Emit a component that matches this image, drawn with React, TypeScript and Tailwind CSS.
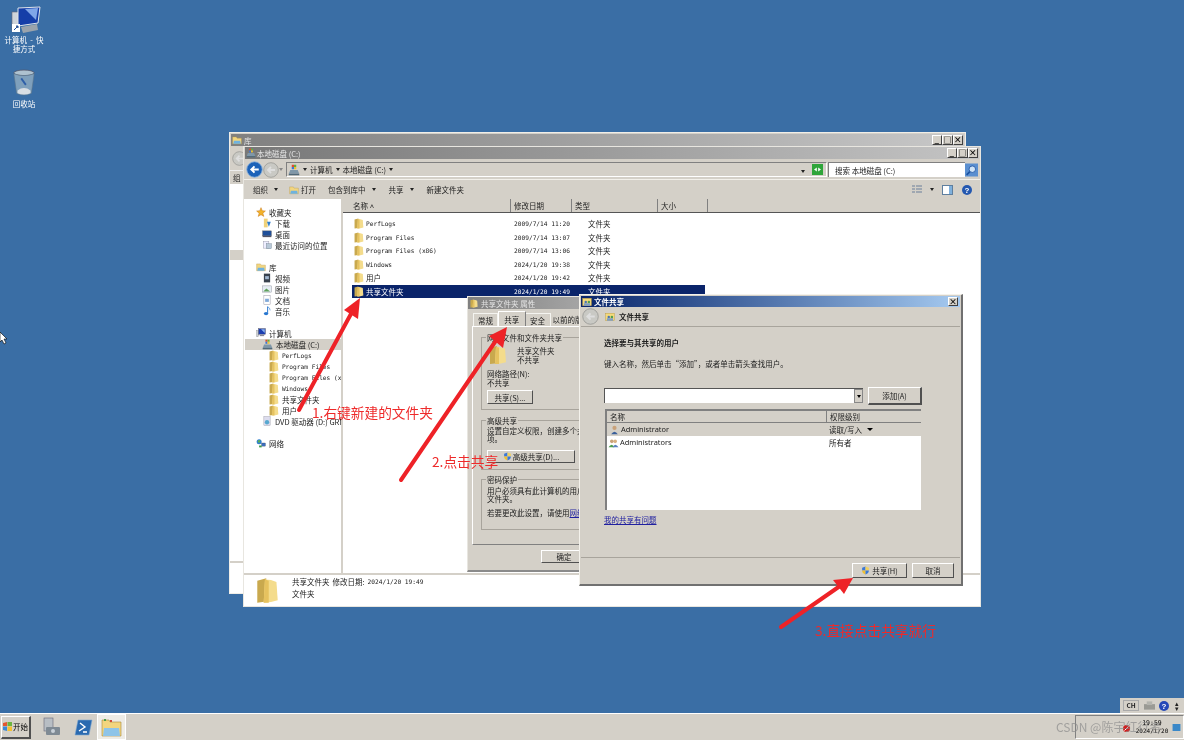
import React from "react";

const Btn = ({ children, className = "" }: { children: React.ReactNode; className?: string }) => (
  <div className={"flex items-center justify-center bg-[#d4d0c8] border border-t-white border-l-white border-r-[#505050] border-b-[#505050] text-[7.5px] text-[#222] " + className}>{children}</div>
);

const Folder = ({ s = 11, w }: { s?: number; w?: number }) => (
  <svg width={w ?? s * 0.9} height={s} viewBox="0 0 18 22" preserveAspectRatio="none" className="shrink-0">
    <path d="M1 3 L8 1 L8 20 L1 21 Z" fill="#c9a94e" />
    <path d="M7 2 Q12 2 16 4 L17 19 Q12 21 6 21 Z" fill="#f4dc8c" />
    <path d="M7 2 L10 3 L10 21 L6 21 Z" fill="#e6c25f" />
  </svg>
);

const WinBtns = () => (
  <div className="flex ml-auto">
    {["_", "□", "×"].map((c) => (
      <div key={c} className="w-[10.5px] h-[10px] bg-[#d4d0c8] border border-t-white border-l-white border-r-[#404040] border-b-[#404040] flex items-center justify-center text-[8px] leading-none text-black font-bold">{c}</div>
    ))}
  </div>
);

const Computer = ({ s = 10 }: { s?: number }) => (
  <svg width={s} height={s} viewBox="0 0 16 16" className="shrink-0">
    <rect x="1" y="4" width="3" height="10" fill="#c8ccd2" stroke="#777" strokeWidth=".5" />
    <rect x="4" y="1" width="11" height="9" fill="#1d3fb0" stroke="#556" strokeWidth=".7" />
    <path d="M8 2 L14 2 L14 8 Z" fill="#8ab2ee" />
    <rect x="6" y="11" width="7" height="2" fill="#889" />
  </svg>
);
const Drive = ({ s = 11 }: { s?: number }) => (
  <svg width={s} height={s} viewBox="0 0 16 16" className="shrink-0">
    <rect x="5" y="1" width="3" height="3" fill="#e3482f" />
    <rect x="8" y="1" width="3" height="3" fill="#60b040" />
    <rect x="5" y="4" width="3" height="3" fill="#3a78d8" />
    <rect x="8" y="4" width="3" height="3" fill="#f0c030" />
    <path d="M3 8 L13 8 L15 13 L1 13 Z" fill="#7f97a8" />
    <rect x="1" y="13" width="14" height="2" fill="#506878" />
  </svg>
);
const Star = () => (
  <svg width="10" height="10" viewBox="0 0 16 16" className="shrink-0"><path d="M8 1 L10 6 L15 6.4 L11 10 L12.5 15 L8 12.3 L3.5 15 L5 10 L1 6.4 L6 6 Z" fill="#f3b32a" stroke="#c9781c" strokeWidth=".8" /></svg>
);
const Lib = () => (
  <svg width="10" height="10" viewBox="0 0 16 16" className="shrink-0"><path d="M1 3 L7 3 L8 5 L15 5 L15 14 L1 14 Z" fill="#f2d57e" stroke="#b99a45" strokeWidth=".6" /><path d="M3 9 L13 9 L14 14 L2 14 Z" fill="#6eb2e0" /></svg>
);
const Net = () => (
  <svg width="10" height="10" viewBox="0 0 16 16" className="shrink-0"><circle cx="5" cy="6" r="4" fill="#2f7fd0" /><path d="M3 4 L7 3 L6 7 L3 7Z" fill="#5fb050" /><rect x="9" y="8" width="6" height="5" fill="#3c6ec0" stroke="#345" strokeWidth=".5" /><rect x="5" y="12" width="4" height="3" fill="#3a9a48" /></svg>
);
const Small = ({ kind }: { kind: string }) => {
  const f: Record<string, React.ReactNode> = {
    dl: <><rect x="3" y="1" width="6" height="14" fill="#f0d27a" /><path d="M8 6 L14 6 L11 14Z" fill="#2f7fd0" /></>,
    desk: <><rect x="1" y="3" width="14" height="8" fill="#1f4f9a" stroke="#555" strokeWidth=".6" /><rect x="1" y="11" width="14" height="2" fill="#556" /></>,
    rec: <><rect x="2" y="2" width="9" height="11" fill="#eef" stroke="#889" strokeWidth=".6" /><rect x="7" y="6" width="8" height="8" fill="#b8c8d8" stroke="#678" strokeWidth=".6" /></>,
    vid: <><rect x="3" y="1" width="10" height="14" fill="#39424e" /><rect x="5" y="5" width="6" height="5" fill="#9fb6d0" /></>,
    pic: <><rect x="1" y="3" width="14" height="10" fill="#e6eef4" stroke="#889" strokeWidth=".7" /><path d="M2 12 L7 7 L13 12Z" fill="#5fa05a" /></>,
    doc: <><rect x="3" y="1" width="10" height="14" fill="#fff" stroke="#889" strokeWidth=".7" /><rect x="5" y="6" width="6" height="5" fill="#7fa8d8" /></>,
    mus: <><path d="M9 1 L9 11" stroke="#2a78d0" strokeWidth="1.6" /><ellipse cx="6.5" cy="12" rx="3.5" ry="2.6" fill="#2a78d0" /><path d="M9 1 Q13 3 13 7" stroke="#2a78d0" fill="none" /></>,
    dvd: <><rect x="3" y="1" width="10" height="14" fill="#dde" stroke="#889" strokeWidth=".6" /><circle cx="8" cy="10" r="3.5" fill="#58a8d0" /></>,
  };
  return <svg width="10" height="10" viewBox="0 0 16 16" className="shrink-0">{f[kind]}</svg>;
};
const Shield = ({ s = 9 }: { s?: number }) => (
  <svg width={s} height={s} viewBox="0 0 16 16" className="shrink-0">
    <path d="M8 1 L2 3 L2 8 L8 8 Z" fill="#3a78d8" />
    <path d="M2 8 Q2 13 8 15 L8 8Z" fill="#f0c030" />
    <path d="M8 8 L14 8 L14 3 L8 1Z" fill="#f0d060" />
    <path d="M8 8 L14 8 Q14 13 8 15 Z" fill="#3a78d8" />
  </svg>
);
const Share = () => (
  <svg width="10" height="10" viewBox="0 0 16 16" className="shrink-0"><rect x="1" y="2" width="14" height="12" fill="#f4d97a" stroke="#b99a45" strokeWidth=".7" /><circle cx="6" cy="8" r="2" fill="#4a74b0" /><circle cx="11" cy="8" r="2" fill="#4f9d50" /><rect x="3" y="10" width="10" height="4" fill="#7d9cc4" /></svg>
);
const Tri = ({ c = "#222" }: { c?: string }) => <span className="inline-block w-0 h-0 border-x-[2.5px] border-x-transparent border-t-[3px]" style={{ borderTopColor: c }} />;

const Circle = ({ blue, s = 15 }: { blue?: boolean; s?: number }) => (
  <svg width={s} height={s} viewBox="0 0 16 16" className="shrink-0">
    <circle cx="8" cy="8" r="7.3" fill={blue ? "#1c62b8" : "#c9c9c4"} stroke={blue ? "#8fb4dc" : "#9a9a96"} strokeWidth=".8" />
    <path d="M12 8 L5 8 M8 5 L5 8 L8 11" stroke={blue ? "#fff" : "#dedede"} strokeWidth="1.8" fill="none" />
  </svg>
);

const files = [
  ["PerfLogs", "2009/7/14 11:20"],
  ["Program Files", "2009/7/14 13:07"],
  ["Program Files (x86)", "2009/7/14 13:06"],
  ["Windows", "2024/1/20 19:38"],
  ["用户", "2024/1/20 19:42"],
];

const mono = "font-['DejaVu_Sans_Mono','Noto_Sans_CJK_SC',monospace] text-[6.2px]";

const Side = ({ icon, label, indent = 0, active = false, m = false }: { icon: React.ReactNode; label: string; indent?: number; active?: boolean; m?: boolean }) => (
  <div className={"h-[11px] flex items-center gap-[3px] whitespace-nowrap overflow-hidden " + (active ? "bg-[#d4d0c8]" : "")} style={{ paddingLeft: indent }}>
    {icon}
    <span className={m ? mono : ""}>{label}</span>
  </div>
);

const Fieldset = ({ title, className = "", children }: { title: string; className?: string; children: React.ReactNode }) => (
  <div className={"relative border border-[#a8a49c] px-[5px] " + className}>
    <span className="absolute -top-[5px] left-[4px] bg-[#d4d0c8] px-[1px] leading-[9px] whitespace-nowrap">{title}</span>
    {children}
  </div>
);

export default function App() {
  return (
    <div className="relative w-[1184px] h-[740px] overflow-hidden bg-[#3a6ea5] blur-[0.35px] font-['Noto_Sans_CJK_SC','Liberation_Sans',sans-serif] text-[7.5px] leading-[9px] text-[#222]">
      {/* desktop icons */}
      <div className="absolute left-[3px] top-[6px] w-[42px] flex flex-col items-center text-white text-center">
        <svg width="30" height="28" viewBox="0 0 30 28" className="ml-[4px]">
          <rect x="1" y="6" width="7" height="19" fill="#cfd4da" stroke="#667" strokeWidth=".6" />
          <path d="M7 2 L29 1 L27 17 L7 20 Z" fill="#153ea8" stroke="#dfe4ea" strokeWidth="1" />
          <path d="M14 3 L27 2 L25 14 Z" fill="#7fa6e8" />
          <path d="M10 21 L26 18 L27 24 L12 27Z" fill="#9aa3ac" />
          <rect x="1" y="18" width="8" height="8" fill="#fff" /><path d="M3 24 L7 20 M5 20 L7 20 L7 22" stroke="#1c4fa0" />
        </svg>
        <span className="leading-[8.5px] mt-[2px] text-[7.5px] [word-spacing:1.5px]">计算机 - 快<br />捷方式</span>
      </div>
      <div className="absolute left-[3px] top-[68px] w-[42px] flex flex-col items-center text-white">
        <svg width="24" height="30" viewBox="0 0 26 30">
          <ellipse cx="13" cy="4" rx="11" ry="3" fill="#aec2d0" stroke="#556" strokeWidth=".8" />
          <path d="M2 5 L5 26 Q13 30 21 26 L24 5 Q13 9 2 5Z" fill="#7fa0bc" stroke="#5d7488" strokeWidth=".6" />
          <path d="M6 23 Q13 18 20 23 L20 26 Q13 29 6 26Z" fill="#d8dee4" />
          <path d="M10 10 L15 17" stroke="#2f5fa8" strokeWidth="2" />
        </svg>
        <span className="mt-[1px]">回收站</span>
      </div>
      {/* cursor */}
      <svg className="absolute left-0 top-[332px]" width="8" height="13" viewBox="0 0 8 13"><path d="M0 0 L0 10 L2 8 L4 12 L6 11 L4 7 L7 7 Z" fill="#fff" stroke="#000" strokeWidth=".6" /></svg>

      {/* back window: 库 */}
      <div className="absolute left-[229px] top-[132px] w-[737px] h-[462px] bg-[#d4d0c8] border border-[#f0eee8] flex flex-col">
        <div className="h-[12px] mx-[1px] mt-[1px] bg-gradient-to-r from-[#808080] to-[#c8c8c8] flex items-center px-[1px] text-[#e4e4e4] gap-[2px]">
          <Lib /><span>库</span>
          <WinBtns />
        </div>
        <div className="h-[24px] flex items-center pl-[2px]"><Circle /></div>
        <div className="h-[14px] flex items-center pl-[3px] border-t border-[#eee]">组</div>
        <div className="flex-1 bg-white pt-[66px]"><div className="h-[10px] bg-[#d4d0c8]" /></div>
        <div className="h-[32px] bg-white border-t-[2px] border-[#d4d0c8]" />
      </div>

      {/* front window */}
      <div className="absolute left-[243px] top-[146px] w-[738px] h-[461px] bg-[#d4d0c8] border border-[#e8e6e0] flex flex-col">
        <div className="h-[12px] mx-[1px] bg-gradient-to-r from-[#787878] to-[#c4c4c4] flex items-center pl-[1px] pr-[1px] text-[#e8e8e8] gap-[1px] shrink-0">
          <Drive s={10} /><span>本地磁盘 (C:)</span>
          <WinBtns />
        </div>
        {/* address row */}
        <div className="h-[20px] flex items-center pl-[2px] pr-[2px] border-b border-[#f2f0ea] shrink-0 mt-[1px]">
          <Circle blue s={17} />
          <Circle s={16} />
          <Tri c="#888" />
          <div className="ml-[3px] flex-1 h-[15px] flex items-center gap-[3px] pl-[1px] border-t border-l border-[#808080] border-b-white border-b border-r border-r-white">
            <Drive s={12} /><Tri /><span>计算机</span><Tri /><span>本地磁盘 (C:)</span><Tri />
            <span className="ml-auto mr-[4px]"><Tri /></span>
            <svg width="11" height="11" viewBox="0 0 16 16" className="mr-[3px]"><rect width="16" height="16" fill="#2fa53a" /><path d="M3 8 L7 5 L7 11Z M13 8 L9 5 L9 11Z" fill="#fff" /></svg>
          </div>
          <div className="ml-[1px] w-[137px] h-[15px] bg-white border-t border-l border-[#808080] flex items-center pl-[6px]">搜索 本地磁盘 (C:)</div>
          <svg width="13" height="14" viewBox="0 0 16 16"><rect width="16" height="16" fill="#5a8fd0" /><circle cx="9" cy="7" r="4" fill="#cfe4f8" stroke="#1a50a0" /><path d="M6 10 L2 14" stroke="#1a50a0" strokeWidth="2" /></svg>
        </div>
        {/* toolbar */}
        <div className="h-[19px] flex items-center pl-[9px] pr-[8px] shrink-0">
          <span>组织</span><span className="ml-[6px] flex"><Tri /></span>
          <span className="ml-[11px] mr-[2px]"><Lib /></span><span>打开</span>
          <span className="ml-[12px]">包含到库中</span><span className="ml-[6px] flex"><Tri /></span>
          <span className="ml-[13px]">共享</span><span className="ml-[6px] flex"><Tri /></span>
          <span className="ml-[13px]">新建文件夹</span>
          <div className="ml-auto flex items-center gap-[8px]">
            <svg width="10" height="9" viewBox="0 0 10 9"><path d="M0 1h3M0 4h3M0 7h3M4 1h6M4 4h6M4 7h6" stroke="#6a7f9a" /></svg>
            <Tri />
            <svg width="11" height="10" viewBox="0 0 11 10"><rect x=".5" y=".5" width="10" height="9" fill="#fff" stroke="#5f7f9f" /><rect x="7" y="1" width="3" height="8" fill="#7fb0dc" /></svg>
            <svg width="10" height="10" viewBox="0 0 10 10" className="ml-[1px]"><circle cx="5" cy="5" r="5" fill="#2458b0" /><text x="5" y="8" textAnchor="middle" fontSize="8" fill="#fff" fontFamily="Liberation Sans" fontWeight="bold">?</text></svg>
          </div>
        </div>
        {/* body */}
        <div className="flex-1 flex min-h-0">
          <div className="w-[99px] bg-white pt-[7.5px] pl-[1px] shrink-0 border-r-[2px] border-[#d4d0c8]">
            <Side icon={<Star />} label="收藏夹" indent={11} />
            <Side icon={<Small kind="dl" />} label="下载" indent={17} />
            <Side icon={<Small kind="desk" />} label="桌面" indent={17} />
            <Side icon={<Small kind="rec" />} label="最近访问的位置" indent={17} />
            <div className="h-[11px]" />
            <Side icon={<Lib />} label="库" indent={11} />
            <Side icon={<Small kind="vid" />} label="视频" indent={17} />
            <Side icon={<Small kind="pic" />} label="图片" indent={17} />
            <Side icon={<Small kind="doc" />} label="文档" indent={17} />
            <Side icon={<Small kind="mus" />} label="音乐" indent={17} />
            <div className="h-[11px]" />
            <Side icon={<Computer />} label="计算机" indent={11} />
            <Side icon={<Drive />} label="本地磁盘 (C:)" indent={17} active />
            <Side icon={<Folder />} label="PerfLogs" indent={24} m />
            <Side icon={<Folder />} label="Program Files" indent={24} m />
            <Side icon={<Folder />} label="Program Files (x86)" indent={24} m />
            <Side icon={<Folder />} label="Windows" indent={24} m />
            <Side icon={<Folder />} label="共享文件夹" indent={24} />
            <Side icon={<Folder />} label="用户" indent={24} />
            <Side icon={<Small kind="dvd" />} label="DVD 驱动器 (D:) GRMSXVOL" indent={17} />
            <div className="h-[11px]" />
            <Side icon={<Net />} label="网络" indent={11} />
          </div>
          <div className="flex-1 bg-white flex flex-col min-w-0">
            <div className="h-[14px] bg-[#d4d0c8] flex items-center border-b border-[#555] shrink-0">
              {[["名称 ˄", 168, 10], ["修改日期", 61, 3], ["类型", 86, 3], ["大小", 50, 3]].map(([t, w, p]) => (
                <div key={t as string} className="h-full flex items-center border-r-[1.5px] border-[#808080]" style={{ width: w as number, paddingLeft: p as number }}>{t}</div>
              ))}
            </div>
            <div className="pt-[4px] pl-[9px] w-[362px]">
              {files.map(([n, d]) => (
                <div key={n} className="h-[13.5px] flex items-center">
                  <div className="w-[14px] pl-[2px]"><Folder /></div>
                  <span className={"w-[148px] " + (/[a-zA-Z]/.test(n) ? mono : "")}>{n}</span>
                  <span className={"w-[74px] " + mono}>{d}</span>
                  <span>文件夹</span>
                </div>
              ))}
              <div className="h-[13.5px] flex items-center bg-[#0a246a] text-white">
                <div className="w-[14px] pl-[2px]"><Folder /></div>
                <span className="w-[148px]">共享文件夹</span>
                <span className={"w-[74px] " + mono}>2024/1/20 19:49</span>
                <span>文件夹</span>
              </div>
            </div>
          </div>
        </div>
        {/* status */}
        <div className="h-[33px] bg-white border-t-[2px] border-[#d4d0c8] flex items-center pl-[12px] shrink-0">
          <Folder s={27} w={23} />
          <div className="ml-[13px] flex flex-col gap-[3px] mb-[6px]">
            <div className="h-[9px] flex items-center gap-[3px]"><span>共享文件夹</span><span>修改日期:</span><span className={mono}>2024/1/20 19:49</span></div>
            <div>文件夹</div>
          </div>
        </div>
      </div>

      {/* properties dialog */}
      <div className="absolute left-[467px] top-[296px] w-[125px] h-[276px] bg-[#d4d0c8] border-r-[2px] border-b-[2px] border-[#8a8a8a] border-l border-l-[#e8e6e0] border-t border-t-[#e8e6e0] flex flex-col overflow-hidden">
        <div className="h-[12px] bg-gradient-to-r from-[#808080] to-[#a8a8a8] flex items-center gap-[3px] pl-[2px] text-[#e4e4e4] whitespace-nowrap shrink-0"><Folder s={9} />共享文件夹 属性</div>
        <div className="h-[17px] flex items-end pl-[5px] relative shrink-0">
          <div className="h-[13px] w-[27px] flex items-center justify-center border-t border-x border-[#f4f4f0]">常规</div>
          <div className="h-[15px] w-[30px] flex items-center justify-center border-t border-l border-white border-r border-r-[#808080] bg-[#d4d0c8]">共享</div>
          <div className="h-[13px] w-[27px] flex items-center justify-center border-t border-r border-[#f4f4f0]">安全</div>
          <div className="h-[13px] pl-[2px] flex items-center whitespace-nowrap">以前的版本</div>
        </div>
        <div className="flex-1 mx-[4px] border border-t-white border-l-white border-b-[#808080] pt-[10px] pl-[8px] flex flex-col min-w-[140px] w-[140px]">
          <Fieldset title="网络文件和文件夹共享" className="h-[73px] w-[110px] shrink-0">
            <div className="flex items-center gap-[10px] mt-[7px] ml-[2px]">
              <Folder s={20} />
              <div><div>共享文件夹</div><div>不共享</div></div>
            </div>
            <div className="mt-[4px]">网络路径(N):</div>
            <div>不共享</div>
            <Btn className="w-[46px] h-[14px] mt-[3px]">共享(S)...</Btn>
          </Fieldset>
          <Fieldset title="高级共享" className="h-[50px] w-[110px] shrink-0 mt-[10px] whitespace-nowrap">
            <div className="mt-[6px] leading-[8px]">设置自定义权限，创建多个共享<br />项。</div>
            <Btn className="w-[88px] h-[13px] mt-[7px] gap-[1px]"><Shield />高级共享(D)...</Btn>
          </Fieldset>
          <Fieldset title="密码保护" className="h-[51px] w-[110px] shrink-0 mt-[9px] whitespace-nowrap">
            <div className="mt-[7px] leading-[8px]">用户必须具有此计算机的用户帐户<br />文件夹。</div>
            <div className="mt-[5px]">若要更改此设置，请使用<span className="text-[#2020a0] underline">网络</span></div>
          </Fieldset>
        </div>
        <div className="h-[25px] flex items-center pl-[73px] pb-[3px] shrink-0"><Btn className="w-[46px] h-[13px] shrink-0">确定</Btn></div>
      </div>

      {/* share dialog */}
      <div className="absolute left-[579px] top-[294px] w-[384px] h-[292px] bg-[#d4d0c8] border border-t-[#f4f2ec] border-l-[#f4f2ec] border-r-[2px] border-b-[2px] border-r-[#707070] border-b-[#707070] flex flex-col p-[1px]">
        <div className="h-[11px] bg-gradient-to-r from-[#0a246a] to-[#a6caf0] flex items-center gap-[2px] pl-[1px] pr-[2px] text-white font-semibold shrink-0">
          <Share /><span>文件共享</span>
          <div className="ml-auto w-[10px] h-[9px] bg-[#d4d0c8] border border-t-white border-l-white border-r-[#404040] border-b-[#404040] flex items-center justify-center text-[8px] leading-none text-black font-bold">×</div>
        </div>
        <div className="h-[20px] flex items-center pl-[1px] gap-[6px] border-b border-[#a8a49c] shrink-0">
          <Circle s={17} /><Share /><span className="font-semibold -ml-[2px]">文件共享</span>
        </div>
        <div className="flex-1 pl-[23px] pr-[38px] flex flex-col border-b border-[#a8a49c]">
          <div className="mt-[11px] font-bold">选择要与其共享的用户</div>
          <div className="mt-[12px] whitespace-nowrap">键入名称，然后单击“添加”，或者单击箭头查找用户。</div>
          <div className="mt-[19px] flex items-center h-[17px]">
            <div className="w-[259px] h-[15px] bg-white border-t border-l border-[#555] flex justify-end">
              <div className="w-[9px] h-full bg-[#d4d0c8] border border-[#888] flex items-center justify-center"><Tri c="#000" /></div>
            </div>
            <Btn className="ml-[5px] w-[54px] h-[18px] text-[#9a968e] border-r-[2px] border-b-[2px]">添加(A)</Btn>
          </div>
          <div className="mt-[5px] ml-[1px] w-[316px] h-[101px] bg-white border-t-[2px] border-l-[2px] border-[#808080] flex flex-col">
            <div className="h-[12px] bg-[#d4d0c8] flex items-center border-b border-[#808080] shrink-0">
              <div className="w-[220px] pl-[3px] h-full flex items-center border-r border-[#808080]">名称</div>
              <div className="flex-1 pl-[3px] h-full flex items-center">权限级别</div>
            </div>
            <div className="h-[13px] bg-[#d4d0c8] flex items-center shrink-0">
              <div className="w-[222px] flex items-center pl-[3px] gap-[2px] font-['Noto_Sans','Liberation_Sans',sans-serif] text-[7.4px]">
                <svg width="9" height="10" viewBox="0 0 10 12"><circle cx="5" cy="3.5" r="2.5" fill="#c9a27a" /><path d="M1 11 Q5 5 9 11Z" fill="#3a5f9a" /></svg>Administrator
              </div>
              <span className="flex items-center gap-[5px]">读取/写入 <span className="inline-block w-0 h-0 border-x-[3px] border-x-transparent border-t-[3.5px] border-t-black" /></span>
            </div>
            <div className="h-[13px] flex items-center shrink-0">
              <div className="w-[222px] flex items-center pl-[1px] gap-[1px] font-['Noto_Sans','Liberation_Sans',sans-serif] text-[7.4px]">
                <svg width="11" height="10" viewBox="0 0 12 12"><circle cx="4" cy="4" r="2.2" fill="#c9a27a" /><circle cx="8" cy="4" r="2.2" fill="#d8b080" /><path d="M0 11 Q4 5 7 11Z" fill="#4f9d50" /><path d="M5 11 Q8 5 12 11Z" fill="#5a80c0" /></svg>Administrators
              </div>
              <span>所有者</span>
            </div>
          </div>
          <div className="mt-[5px] text-[#2020a0] underline">我的共享有问题</div>
        </div>
        <div className="h-[25px] flex items-center justify-end pr-[6px] gap-[5px] shrink-0">
          <Btn className="w-[55px] h-[15px] gap-[2px]"><Shield />共享(H)</Btn>
          <Btn className="w-[42px] h-[15px]">取消</Btn>
        </div>
      </div>

      {/* red annotations */}
      <svg className="absolute inset-0" width="1184" height="740" viewBox="0 0 1184 740">
        <g stroke="#ee2227" strokeWidth="4" strokeLinecap="round" fill="#ee2227">
          <path d="M299 410 L352 312" />
          <path d="M401 480 L497 339" />
          <path d="M781 627 L840 586" />
        </g>
        <path d="M360 298 L358 319 L344 310 Z" fill="#ee2227" />
        <path d="M507 327 L503 348 L489 336 Z" fill="#ee2227" />
        <path d="M853 578 L844 594 L833 580 Z" fill="#ee2227" />
      </svg>
      <span className="absolute left-[312px] top-[403px] text-[13.7px] leading-[18px] text-[#ee2a2a] whitespace-nowrap">1.右键新建的文件夹</span>
      <span className="absolute left-[432px] top-[452px] text-[13.7px] leading-[18px] text-[#ee2a2a] whitespace-nowrap">2.点击共享</span>
      <span className="absolute left-[815px] top-[621px] text-[13.7px] leading-[18px] text-[#ee2a2a] whitespace-nowrap">3.直接点击共享就行</span>

      {/* tray band */}
      <div className="absolute left-[1120px] top-[698px] w-[64px] h-[15px] bg-[#d4d0c8] flex items-center gap-[6px] pl-[3px] text-[6.5px]">
        <span className="border border-[#aaa] px-[1px] leading-[9px] font-bold w-[16px] text-center">CH</span>
        <svg width="11" height="9" viewBox="0 0 12 9" className="-ml-[1px]"><rect y="3" width="12" height="6" fill="#9a9a94" /><rect x="3" y="0" width="6" height="4" fill="#b4b4ae" /></svg>
        <svg width="10" height="10" viewBox="0 0 10 10" className="-ml-[2px]"><circle cx="5" cy="5" r="5" fill="#2448b8" /><text x="5" y="8" textAnchor="middle" fontSize="8" fill="#fff" fontFamily="Liberation Sans" fontWeight="bold">?</text></svg>
        <span className="leading-[5px]">▴<br />▾</span>
      </div>
      {/* taskbar */}
      <div className="absolute left-0 top-[713px] w-[1184px] h-[27px] bg-[#d4d0c8] border-t border-white flex items-center">
        <Btn className="ml-[1px] w-[30px] h-[23px] gap-[1px] border-r-[2px] border-b-[2px]">
          <svg width="9" height="9" viewBox="0 0 10 10"><path d="M0 1 L4.5 0 L4.5 4.5 L0 4.5Z" fill="#e3562f" /><path d="M5 0 L10 0 L10 4.5 L5 4.5Z" fill="#6cb33f" /><path d="M0 5 L4.5 5 L4.5 10 L0 9Z" fill="#3a88d8" /><path d="M5 5 L10 5 L10 10 L5 10Z" fill="#f4c030" /></svg>
          <span className="text-black">开始</span>
        </Btn>
        <svg className="ml-[11px]" width="20" height="20" viewBox="0 0 20 20"><rect x="2" y="1" width="9" height="13" fill="#b8bec4" stroke="#667" strokeWidth=".6" /><rect x="4" y="10" width="14" height="8" rx="1" fill="#7f8a94" /><circle cx="11" cy="14" r="2" fill="#c8d0d8" /></svg>
        <svg className="ml-[12px]" width="19" height="17" viewBox="0 0 19 17"><path d="M4 1 L18 1 L15 16 L1 16 Z" fill="#2a6ab0" stroke="#7fa8d0" strokeWidth=".6" /><path d="M6 4 L11 8 L5 12 M9 13 L13 13" stroke="#fff" strokeWidth="1.4" fill="none" /></svg>
        <div className="ml-[4px] w-[29px] h-[26px] bg-[#eeece6] border border-white flex items-center justify-center">
          <svg width="21" height="19" viewBox="0 0 21 19"><path d="M1 2 L8 2 L9 4 L20 4 L20 18 L1 18Z" fill="#f2d57e" stroke="#a88a3a" strokeWidth=".6" /><rect x="3" y="1" width="2" height="2" fill="#4aa04a" /><rect x="9" y="2" width="2" height="2" fill="#d04a3a" /><path d="M3 10 L18 10 L19 18 L2 18Z" fill="#8ec4e8" /></svg>
        </div>
        <div className="ml-auto w-[109px] h-[24px] border border-t-[#808080] border-l-[#808080] border-b-white border-r-white flex items-center">
          <svg className="ml-[47px] mt-[3px]" width="7" height="7" viewBox="0 0 7 7"><circle cx="3.5" cy="3.5" r="3.5" fill="#d02020" /><path d="M1.5 5.5 L5.5 1.5" stroke="#fff" /></svg>
          <div className="ml-[5px] w-[34px] text-center leading-[8.5px] font-['DejaVu_Sans_Mono',monospace] text-[6.5px] text-black">19:59<br /><span className="text-[6px]">2024/1/20</span></div>
          <svg className="ml-[3px]" width="9" height="7" viewBox="0 0 9 8"><rect width="9" height="8" fill="#3a88c8" /></svg>
        </div>
      </div>
      <span className="absolute left-[1056px] top-[719px] text-[12px] leading-[16px] text-[#8c8c8c]/70 whitespace-nowrap">CSDN @陈宇红行者</span>
    </div>
  );
}
